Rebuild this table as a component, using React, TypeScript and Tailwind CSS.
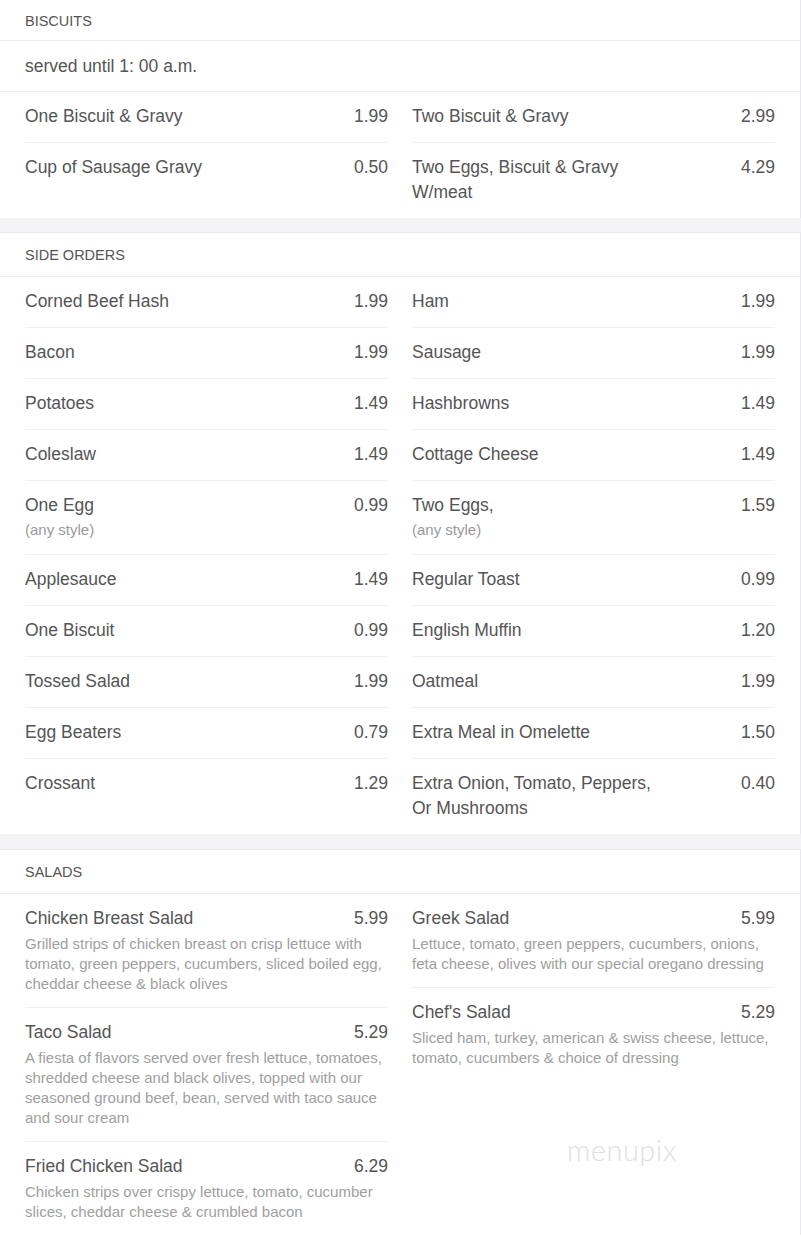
import React from "react";

type Item = { name: string; price: string; note?: string; desc?: string };

const biscuitsL: Item[] = [
  { name: "One Biscuit & Gravy", price: "1.99" },
  { name: "Cup of Sausage Gravy", price: "0.50" },
];
const biscuitsR: Item[] = [
  { name: "Two Biscuit & Gravy", price: "2.99" },
  { name: "Two Eggs, Biscuit & Gravy W/meat", price: "4.29" },
];

const sidesL: Item[] = [
  { name: "Corned Beef Hash", price: "1.99" },
  { name: "Bacon", price: "1.99" },
  { name: "Potatoes", price: "1.49" },
  { name: "Coleslaw", price: "1.49" },
  { name: "One Egg", price: "0.99", note: "(any style)" },
  { name: "Applesauce", price: "1.49" },
  { name: "One Biscuit", price: "0.99" },
  { name: "Tossed Salad", price: "1.99" },
  { name: "Egg Beaters", price: "0.79" },
  { name: "Crossant", price: "1.29" },
];
const sidesR: Item[] = [
  { name: "Ham", price: "1.99" },
  { name: "Sausage", price: "1.99" },
  { name: "Hashbrowns", price: "1.49" },
  { name: "Cottage Cheese", price: "1.49" },
  { name: "Two Eggs,", price: "1.59", note: "(any style)" },
  { name: "Regular Toast", price: "0.99" },
  { name: "English Muffin", price: "1.20" },
  { name: "Oatmeal", price: "1.99" },
  { name: "Extra Meal in Omelette", price: "1.50" },
  { name: "Extra Onion, Tomato, Peppers, Or Mushrooms", price: "0.40" },
];

const saladsL: Item[] = [
  {
    name: "Chicken Breast Salad",
    price: "5.99",
    desc: "Grilled strips of chicken breast on crisp lettuce with tomato, green peppers, cucumbers, sliced boiled egg, cheddar cheese & black olives",
  },
  {
    name: "Taco Salad",
    price: "5.29",
    desc: "A fiesta of flavors served over fresh lettuce, tomatoes, shredded cheese and black olives, topped with our seasoned ground beef, bean, served with taco sauce and sour cream",
  },
  {
    name: "Fried Chicken Salad",
    price: "6.29",
    desc: "Chicken strips over crispy lettuce, tomato, cucumber slices, cheddar cheese & crumbled bacon",
  },
];
const saladsR: Item[] = [
  {
    name: "Greek Salad",
    price: "5.99",
    desc: "Lettuce, tomato, green peppers, cucumbers, onions, feta cheese, olives with our special oregano dressing",
  },
  {
    name: "Chef's Salad",
    price: "5.29",
    desc: "Sliced ham, turkey, american & swiss cheese, lettuce, tomato, cucumbers & choice of dressing",
  },
];

function Row({ item }: { item: Item }) {
  return (
    <div className="border-b border-[#efeff1] pt-3 pb-[13px] last:border-b-0">
      <div className="flex items-start justify-between gap-6 text-[17.5px] leading-[25px] text-[#555]">
        <span className="max-w-[250px]">{item.name}</span>
        <span>{item.price}</span>
      </div>
      {item.note && (
        <div className="text-[15px] leading-[23px] text-[#9a9a9a]">{item.note}</div>
      )}
      {item.desc && (
        <div className="mt-[3px] text-[15px] leading-[20px] text-[#a0a0a0]">{item.desc}</div>
      )}
    </div>
  );
}

function Columns({ left, right }: { left: Item[]; right: Item[] }) {
  return (
    <div className="grid grid-cols-2 gap-x-6 px-[25px]">
      <div className="flex flex-col">
        {left.map((it) => (
          <Row key={it.name} item={it} />
        ))}
      </div>
      <div className="flex flex-col">
        {right.map((it) => (
          <Row key={it.name} item={it} />
        ))}
      </div>
    </div>
  );
}

function Header({ title, first }: { title: string; first?: boolean }) {
  return (
    <div
      className={
        first
          ? "flex h-[44px] items-center border-b border-[#ececee] px-[25px] pt-[6px] text-[14.5px] uppercase text-[#555]"
          : "flex h-[44px] items-center border-b border-[#ececee] px-[25px] pt-[3px] text-[14.5px] uppercase text-[#555]"
      }
    >
      {title}
    </div>
  );
}

export default function App() {
  return (
    <div className="min-h-[1237px] bg-[#f3f3f6] font-['Liberation_Sans',Arial,sans-serif]">
      <div className="-mt-[3px] flex flex-col">
        <section className="border-r border-[#e7e7ea] bg-white">
          <Header title="Biscuits" first />
          <div className="flex h-[51px] items-center border-b border-[#ececee] px-[25px] text-[17.5px] text-[#555]">
            served until 1: 00 a.m.
          </div>
          <Columns left={biscuitsL} right={biscuitsR} />
        </section>

        <section className="mt-[14px] border-r border-t border-[#e9e9ec] bg-white">
          <Header title="Side Orders" />
          <Columns left={sidesL} right={sidesR} />
        </section>

        <section className="relative mt-[15px] border-r border-t border-[#e9e9ec] bg-white">
          <Header title="Salads" />
          <Columns left={saladsL} right={saladsR} />
          <div className="pointer-events-none absolute left-[567px] top-[278px] font-['Lato','Open_Sans',sans-serif] text-[29px] font-light tracking-[0.5px] text-[#e0e0e0]">
            menupix
          </div>
        </section>
      </div>
    </div>
  );
}
